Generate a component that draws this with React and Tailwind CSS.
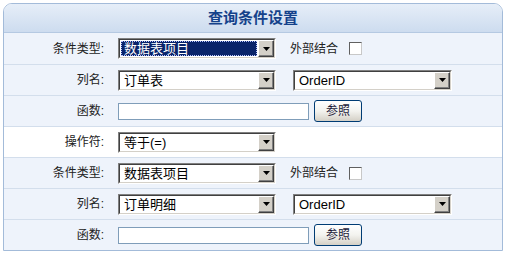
import React from "react";

function Select({ w, text, selected }) {
  return (
    <div
      className={`flex h-[21px] ${w} shrink-0 border border-t-[#808080] border-l-[#808080] border-b-[#ffffff] border-r-[#ffffff]`}
    >
      <div className="flex flex-1 border border-t-[#404040] border-l-[#404040] border-b-[#d4d0c8] border-r-[#d4d0c8] bg-white">
        <div className="flex flex-1 items-center p-[1px]">
          {selected ? (
            <div className="flex h-full w-full items-center border border-dotted border-[#b8c4ff] bg-[#0a246a] pl-[2px] text-[13px] leading-none text-white">
              {text}
            </div>
          ) : (
            <div className="flex h-full w-full items-center pl-[3px] text-[13px] leading-none text-black">
              {text}
            </div>
          )}
        </div>
        <div className="flex w-[16px] items-center justify-center border border-t-[#ffffff] border-l-[#ffffff] border-b-[#404040] border-r-[#404040] bg-[#d4d0c8] shadow-[inset_-1px_-1px_0_#808080]">
          <svg width="7" height="4" viewBox="0 0 7 4">
            <path d="M0 0H7L3.5 4Z" fill="#000" />
          </svg>
        </div>
      </div>
    </div>
  );
}

function Input() {
  return <div className="h-[17px] w-[191px] shrink-0 border border-[#7f9db9] bg-white" />;
}

function RefButton() {
  return (
    <div className="ml-[5px] flex h-[22px] w-[48px] shrink-0 items-center justify-center rounded-[3px] border border-[#003c74] bg-gradient-to-b from-[#ffffff] via-[#f3f3ef] to-[#d4d0c6] text-[12px] leading-none text-[#1b1b3a]">
      参照
    </div>
  );
}

function Checkbox() {
  return <div className="ml-[11px] h-[13px] w-[13px] shrink-0 border border-t-[#606060] border-l-[#606060] border-b-[#c8c8c8] border-r-[#c8c8c8] bg-white" />;
}

function Row({ label, children, white, first }) {
  return (
    <div
      className={`flex h-[31px] items-center ${first ? "" : "border-t border-[#d3deec]"} ${
        white ? "bg-white" : "bg-[#eef3fb]"
      }`}
    >
      <div className="w-[106px] shrink-0 pr-[6px] text-right text-[12px] leading-none text-[#222]">
        {label}
      </div>
      <div className="flex items-center pl-[8px]">{children}</div>
    </div>
  );
}

export default function App() {
  return (
    <div className="h-[255px] w-[505px] bg-white pl-[3px] pt-[3px] font-['Liberation_Sans','Noto_Sans_CJK_SC',sans-serif]">
      <div className="w-[500px] overflow-hidden rounded-tl-[9px] rounded-tr-[9px] border border-[#a3bbd9]">
        <div className="flex h-[29px] items-center justify-center border-b border-[#b5c9e2] bg-gradient-to-b from-[#e6eef8] to-[#cddcef] text-[15px] font-bold text-[#15428b]">
          查询条件设置
        </div>
        <Row label="条件类型:" first>
          <Select w="w-[158px]" text="数据表项目" selected />
          <span className="ml-[14px] text-[12px] leading-none text-[#222]">外部结合</span>
          <Checkbox />
        </Row>
        <Row label="列名:">
          <Select w="w-[158px]" text="订单表" />
          <div className="ml-[17px]">
            <Select w="w-[159px]" text="OrderID" />
          </div>
        </Row>
        <Row label="函数:">
          <Input />
          <RefButton />
        </Row>
        <Row label="操作符:" white>
          <Select w="w-[158px]" text="等于(=)" />
        </Row>
        <Row label="条件类型:">
          <Select w="w-[158px]" text="数据表项目" />
          <span className="ml-[14px] text-[12px] leading-none text-[#222]">外部结合</span>
          <Checkbox />
        </Row>
        <Row label="列名:">
          <Select w="w-[158px]" text="订单明细" />
          <div className="ml-[17px]">
            <Select w="w-[159px]" text="OrderID" />
          </div>
        </Row>
        <Row label="函数:">
          <Input />
          <RefButton />
        </Row>
      </div>
    </div>
  );
}
